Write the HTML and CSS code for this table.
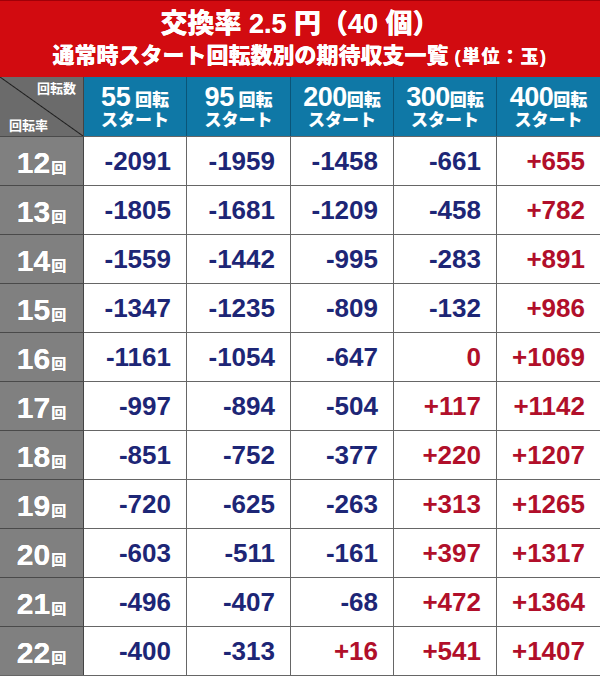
FILE: index.html
```html
<!DOCTYPE html>
<html lang="ja">
<head>
<meta charset="utf-8">
<link rel="stylesheet" href="styles.css">
</head>
<body>
<div class="page">
  <header class="title">
    <div class="t1">交換率 2.5 円（40 個）</div>
    <div class="t2">通常時スタート回転数別の期待収支一覧 <span class="unit">(単位：玉)</span></div>
  </header>
  <div class="table">
    <div class="corner"><span class="c-top">回転数</span><span class="c-bot">回転率</span></div>
    <div class="hd"><div><span class="big">55</span> 回転</div><div>スタート</div></div>
    <div class="hd"><div><span class="big">95</span> 回転</div><div>スタート</div></div>
    <div class="hd"><div><span class="big">200</span>回転</div><div>スタート</div></div>
    <div class="hd"><div><span class="big">300</span>回転</div><div>スタート</div></div>
    <div class="hd"><div><span class="big">400</span>回転</div><div>スタート</div></div>

    <div class="rl">12<span>回</span></div><div class="n neg">-2091</div><div class="n neg">-1959</div><div class="n neg">-1458</div><div class="n neg">-661</div><div class="n pos">+655</div>
    <div class="rl">13<span>回</span></div><div class="n neg">-1805</div><div class="n neg">-1681</div><div class="n neg">-1209</div><div class="n neg">-458</div><div class="n pos">+782</div>
    <div class="rl">14<span>回</span></div><div class="n neg">-1559</div><div class="n neg">-1442</div><div class="n neg">-995</div><div class="n neg">-283</div><div class="n pos">+891</div>
    <div class="rl">15<span>回</span></div><div class="n neg">-1347</div><div class="n neg">-1235</div><div class="n neg">-809</div><div class="n neg">-132</div><div class="n pos">+986</div>
    <div class="rl">16<span>回</span></div><div class="n neg">-1161</div><div class="n neg">-1054</div><div class="n neg">-647</div><div class="n pos">0</div><div class="n pos">+1069</div>
    <div class="rl">17<span>回</span></div><div class="n neg">-997</div><div class="n neg">-894</div><div class="n neg">-504</div><div class="n pos">+117</div><div class="n pos">+1142</div>
    <div class="rl">18<span>回</span></div><div class="n neg">-851</div><div class="n neg">-752</div><div class="n neg">-377</div><div class="n pos">+220</div><div class="n pos">+1207</div>
    <div class="rl">19<span>回</span></div><div class="n neg">-720</div><div class="n neg">-625</div><div class="n neg">-263</div><div class="n pos">+313</div><div class="n pos">+1265</div>
    <div class="rl">20<span>回</span></div><div class="n neg">-603</div><div class="n neg">-511</div><div class="n neg">-161</div><div class="n pos">+397</div><div class="n pos">+1317</div>
    <div class="rl">21<span>回</span></div><div class="n neg">-496</div><div class="n neg">-407</div><div class="n neg">-68</div><div class="n pos">+472</div><div class="n pos">+1364</div>
    <div class="rl">22<span>回</span></div><div class="n neg">-400</div><div class="n neg">-313</div><div class="n pos">+16</div><div class="n pos">+541</div><div class="n pos">+1407</div>
  </div>
</div>
</body>
</html>
```

FILE: styles.css
```css
* { box-sizing: border-box; }
html, body { margin: 0; padding: 0; background: #fff; }
body {
  font-family: "Liberation Sans", "Noto Sans CJK JP", sans-serif;
  font-weight: 700;
}
.page { width: 600px; }

.title {
  height: 77px;
  background: #d20b10;
  border-top: 1px solid #a00008;
  color: #fff;
  text-align: center;
  padding-top: 6px;
}
.t1 {
  font-size: 27px;
  line-height: 34px;
  font-weight: 900;
}
.t1, .t2 { text-shadow: 0 0 0.4px #fff; }
.t2 {
  font-size: 22px;
  line-height: 30px;
  font-weight: 900;
}
.t2 .unit {
  font-size: 18px;
  letter-spacing: 1.5px;
}

.table {
  display: grid;
  grid-template-columns: 84px 103px 104px 103px 103px 103px;
  grid-template-rows: 59px repeat(11, 49px);
  border-bottom: 1px solid #666;
}

.corner {
  background-color: #6b6b6b;
  background-image: linear-gradient(to top right, transparent calc(50% - 1px), #1e1e1e 50%, transparent calc(50% + 1px));
  color: #fff;
  font-size: 13px;
  line-height: 16px;
  display: flex;
  flex-direction: column;
  justify-content: space-between;
  padding: 4px 7px 2px 9px;
  border-right: 1px solid #444;
}
.c-top { align-self: flex-end; }
.c-bot { align-self: flex-start; }

.hd {
  background: #0f78a6;
  color: #fff;
  border-right: 1px solid #0a5578;
  display: flex;
  flex-direction: column;
  align-items: center;
  justify-content: center;
  font-size: 17px;
  line-height: 22px;
  font-weight: 900;
  padding-top: 1px;
}
.hd:nth-child(6) { border-right: none; }
.hd .big {
  font-size: 27px;
  font-weight: 700;
  letter-spacing: -0.5px;
}
.hd > div:first-child { line-height: 28px; height: 27px; }

.rl {
  background: #808080;
  color: #fff;
  border-top: 1px solid #4a4a4a;
  border-right: 1px solid #444;
  display: flex;
  align-items: baseline;
  justify-content: center;
  font-size: 30px;
  line-height: 48px;
  padding-top: 2px;
  text-shadow: 0 0 0.5px #fff;
}
.rl span {
  font-size: 15px;
  margin-left: 1px;
}

.n {
  border-top: 1px solid #666;
  border-right: 1px solid #666;
  display: flex;
  align-items: center;
  justify-content: flex-end;
  padding-right: 15px;
  font-size: 26px;
  line-height: 1;
}
.table > .n:nth-child(6n) { border-right: none; }
.neg { color: #1d2676; }
.pos { color: #b10f2a; }
```
